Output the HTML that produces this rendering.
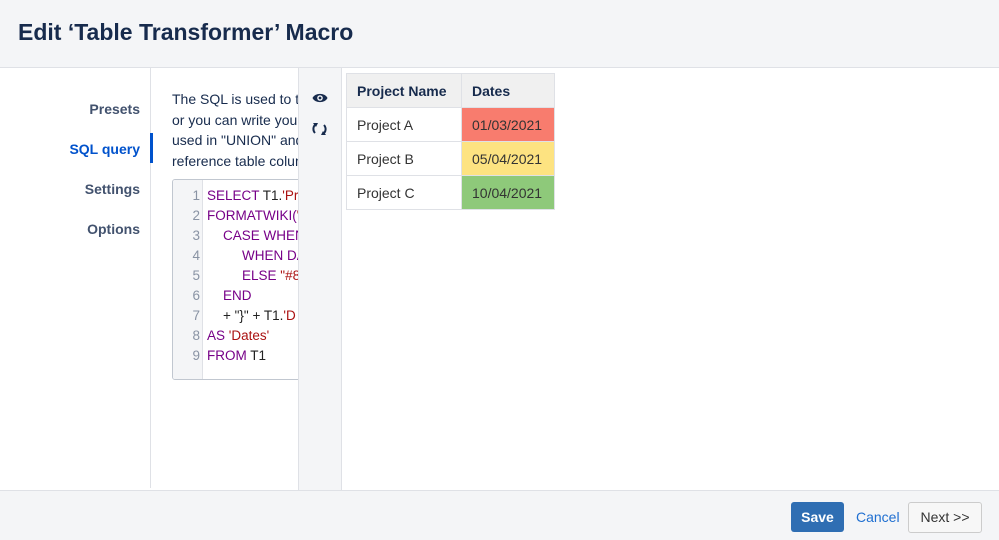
<!DOCTYPE html>
<html><head><style>
body{margin:0;width:999px;height:539px;overflow:hidden;font-family:"Liberation Sans",sans-serif;background:#fff;position:relative;color:#172b4d}
.hdr{position:absolute;left:0;top:0;width:999px;height:67px;background:#f4f5f7;border-bottom:1px solid #dfe1e6}
.hdr h1{margin:0;position:absolute;left:18px;top:19px;font-size:23px;font-weight:bold;color:#172b4d;letter-spacing:0px}
.nav{position:absolute;left:0;top:68px;width:150px;height:420px;border-right:1px solid #dfe1e6}
.nav div{position:absolute;right:10px;font-size:14px;font-weight:bold;color:#42526e}
.sel{color:#0052cc!important}
.bar{position:absolute;left:150px;top:133px;width:3px;height:30px;background:#0052cc}
.txt{position:absolute;left:172px;top:89px;width:126px;overflow:hidden;white-space:nowrap;font-size:14px;line-height:20.5px;color:#172b4d}
.code{position:absolute;left:172px;top:179px;width:140px;height:199px;border:1px solid #c1c7d0;border-radius:3px;background:#fff;overflow:hidden}
.gut{position:absolute;left:0;top:0;width:29px;height:199px;background:#f4f5f7;border-right:1px solid #dfe1e6}
.ln{position:absolute;left:0;width:27px;text-align:right;color:#8993a4;font-size:13.5px}
.cl{position:absolute;left:34px;font-size:13.5px;white-space:nowrap;color:#770088}
.s{color:#aa1111}.k{color:#222}
.tb{position:absolute;left:298px;top:68px;width:42px;height:422px;background:#f4f5f7;border-left:1px solid #dfe1e6;border-right:1px solid #dfe1e6}
table{position:absolute;left:346px;top:73px;border-collapse:collapse;font-size:14px}
td,th{border:1px solid #dfe1e6;height:33px;padding:0 10px;text-align:left;color:#333}
th{background:#f0f0f0;font-weight:bold;color:#172b4d}
.ftr{position:absolute;left:0;top:490px;width:999px;height:49px;background:#f4f5f7;border-top:1px solid #dfe1e6}
.save{position:absolute;left:791px;top:11px;width:53px;height:30px;background:#2f6eb3;border-radius:3px;color:#fff;font-weight:bold;font-size:14px;text-align:center;line-height:30px}
.cancel{position:absolute;left:856px;top:18px;color:#1f6fd1;font-size:14px}
.next{position:absolute;left:908px;top:11px;width:72px;height:29px;border:1px solid #ccc;border-radius:3px;background:#f7f7f7;font-size:14px;line-height:29px;text-align:center;color:#333}
</style></head><body>
<div class="hdr"><h1>Edit ‘Table Transformer’ Macro</h1></div>
<div class="nav">
<div style="top:33px">Presets</div>
<div class="sel" style="top:73px">SQL query</div>
<div style="top:113px">Settings</div>
<div style="top:153px">Options</div>
</div>
<div class="bar"></div>
<div class="txt">The SQL is used to transform<br>or you can write your own<br>used in "UNION" and<br>reference table column</div>
<div class="code"><div class="gut"></div>
<div class="ln" style="top:8px">1</div><div class="cl" style="top:8px">SELECT <span class="k">T1.</span><span class="s">'Proj</span></div>
<div class="ln" style="top:28px">2</div><div class="cl" style="top:28px">FORMATWIKI(<span class="s">"</span></div>
<div class="ln" style="top:48px">3</div><div class="cl" style="top:48px;left:50px">CASE WHEN</div>
<div class="ln" style="top:68px">4</div><div class="cl" style="top:68px;left:69px">WHEN DA</div>
<div class="ln" style="top:88px">5</div><div class="cl" style="top:88px;left:69px">ELSE <span class="s">"#8F</span></div>
<div class="ln" style="top:108px">6</div><div class="cl" style="top:108px;left:50px">END</div>
<div class="ln" style="top:128px">7</div><div class="cl k" style="top:128px;left:50px;color:#222">+ "}" + T1.<span class="s">'D</span></div>
<div class="ln" style="top:148px">8</div><div class="cl" style="top:148px">AS <span class="s">'Dates'</span></div>
<div class="ln" style="top:168px">9</div><div class="cl" style="top:168px">FROM <span class="k">T1</span></div>
</div>
<div class="tb">
<svg style="position:absolute;left:13px;top:24px" width="16" height="12" viewBox="0 0 16 12"><path d="M0.5 6C3 0.5 13 0.5 15.5 6C13 11.5 3 11.5 0.5 6Z" fill="#172b4d"/><circle cx="8" cy="6" r="2.8" fill="#f4f5f7"/><circle cx="8" cy="6" r="1.4" fill="#172b4d"/></svg>
<svg style="position:absolute;left:13px;top:53px" width="15" height="16" viewBox="0 0 15 16"><path d="M4 3A6 6 0 0 0 3 12M11 13A6 6 0 0 0 12 4" stroke="#172b4d" stroke-width="2" fill="none"/><path d="M1 2L6 2L4 6Z M14 14L9 14L11 10Z" fill="#172b4d"/></svg>
</div>
<table>
<tr><th style="width:94px">Project Name</th><th style="width:72px">Dates</th></tr>
<tr><td>Project A</td><td style="background:#f87c6e">01/03/2021</td></tr>
<tr><td>Project B</td><td style="background:#fde381">05/04/2021</td></tr>
<tr><td>Project C</td><td style="background:#8ec97a">10/04/2021</td></tr>
</table>
<div class="ftr"><div class="save">Save</div><div class="cancel">Cancel</div><div class="next">Next &gt;&gt;</div></div>
</body></html>
